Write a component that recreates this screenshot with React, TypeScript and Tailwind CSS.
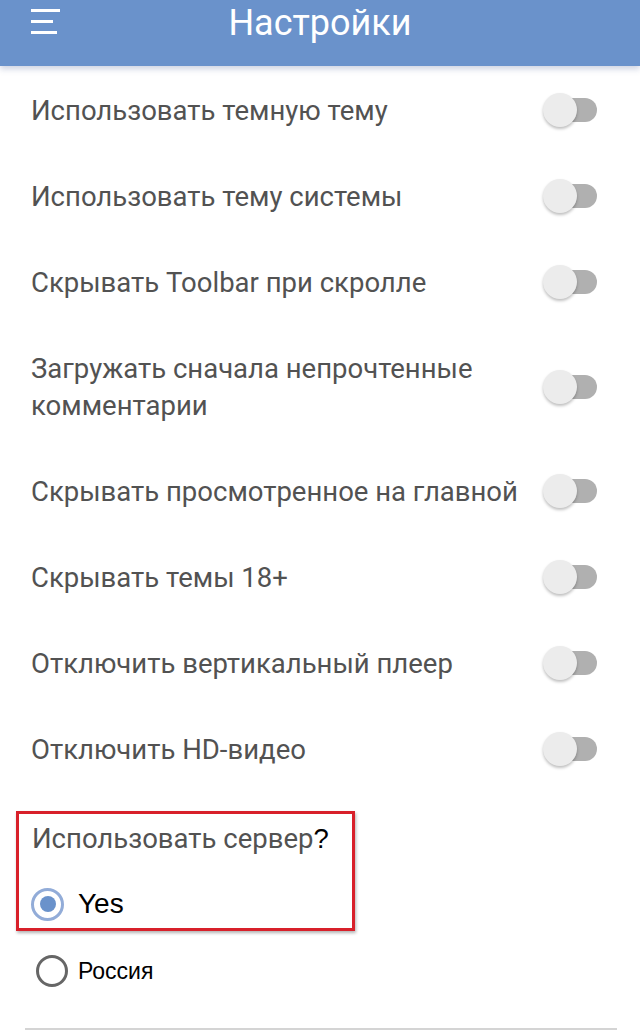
import React from "react";

const rows = [
  "Использовать темную тему",
  "Использовать тему системы",
  "Скрывать Toolbar при скролле",
  "Загружать сначала непрочтенные комментарии",
  "Скрывать просмотренное на главной",
  "Скрывать темы 18+",
  "Отключить вертикальный плеер",
  "Отключить HD-видео",
];

function Toggle() {
  return (
    <div className="relative w-[54px] h-[34px] shrink-0 flex items-center">
      <div className="absolute right-0 w-[42px] h-[24px] rounded-full bg-[#b0b0b0]" />
      <div className="absolute left-0 w-[34px] h-[34px] rounded-full bg-[#ececec] shadow-[0_2px_3px_rgba(0,0,0,0.25)]" />
    </div>
  );
}

export default function App() {
  return (
    <div className="w-[640px] h-[1033px] overflow-hidden bg-white font-['Roboto',sans-serif]">
      <header className="relative h-[66px] bg-[#6a92cb] flex items-center justify-center shadow-[0_3px_6px_rgba(60,80,140,0.25)]">
        <div className="absolute left-[31px] top-[9px] flex flex-col gap-[8px]">
          <div className="w-[29px] h-[3px] bg-white" />
          <div className="w-[22px] h-[3px] bg-white" />
          <div className="w-[26px] h-[3px] bg-white" />
        </div>
        <h1 className="text-white text-[36px] leading-none -mt-[20px] font-normal">Настройки</h1>
      </header>

      <div className="pt-[1px]">
        {rows.map((r) => (
          <div key={r} className="flex items-center justify-between pl-[31px] pr-[43px] py-[24.5px]">
            <span className="text-[#525252] text-[27.5px] leading-[37px] max-w-[490px]">{r}</span>
            <Toggle />
          </div>
        ))}
      </div>

      <div className="ml-[16px] mt-[19px] w-[339px] h-[120px] border-[3px] border-[#d8202a] shadow-[1px_2px_3px_rgba(0,0,0,0.3)] pl-[13px] pt-[5.5px]">
        <div className="text-[27.5px] leading-[37px] text-[#525252]">
          Использовать сервер<span className="text-black font-['Liberation_Sans',sans-serif]">?</span>
        </div>
        <div className="flex items-center mt-[31px] -ml-[1px]">
          <div className="w-[33px] h-[33px] rounded-full border-[3px] border-[#92acd8] flex items-center justify-center">
            <div className="w-[16px] h-[16px] rounded-full bg-[#6a92cb]" />
          </div>
          <span className="ml-[14px] text-[28px] text-black font-['Liberation_Sans',sans-serif] leading-none">Yes</span>
        </div>
      </div>

      <div className="flex items-center ml-[36px] mt-[24px]">
        <div className="w-[32px] h-[32px] rounded-full border-[3px] border-[#666]" />
        <span className="ml-[10px] text-[23px] text-black font-['Liberation_Sans',sans-serif] leading-none">Россия</span>
      </div>

      <div className="ml-[25px] w-[592px] h-[2px] bg-[#d4d4d4] mt-[41px]" />
    </div>
  );
}
